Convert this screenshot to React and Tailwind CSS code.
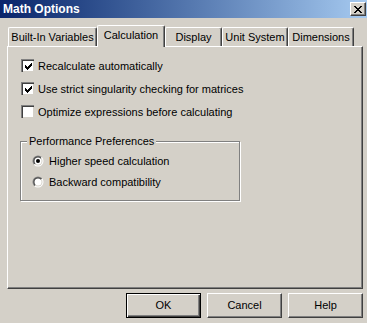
import React from "react";

const font = { fontFamily: '"Liberation Sans", Arial, sans-serif' };

function Check({ checked }) {
  return (
    <div className="w-[13px] h-[13px] bg-white border-t border-l border-[#808080] border-r-white border-b-white shadow-[inset_1px_1px_#404040,inset_-1px_-1px_#D4D0C8] flex items-center justify-center shrink-0">
      {checked && (
        <svg width="7" height="7" viewBox="0 0 7 7" shapeRendering="crispEdges">
          <path
            fill="#000"
            d="M6 0h1v3h-1zM5 1h1v3h-1zM4 2h1v3h-1zM3 3h1v3h-1zM2 4h1v3h-1zM1 3h1v3h-1zM0 2h1v3h-1z"
          />
        </svg>
      )}
    </div>
  );
}

function Radio({ checked }) {
  return (
    <svg width="12" height="12" viewBox="0 0 12 12" className="shrink-0">
      <defs>
        <linearGradient id="ro" x1="0" y1="0" x2="1" y2="1">
          <stop offset="0.5" stopColor="#808080" />
          <stop offset="0.5" stopColor="#ffffff" />
        </linearGradient>
        <linearGradient id="ri" x1="0" y1="0" x2="1" y2="1">
          <stop offset="0.5" stopColor="#404040" />
          <stop offset="0.5" stopColor="#D4D0C8" />
        </linearGradient>
      </defs>
      <circle cx="6" cy="6" r="5.5" fill="url(#ro)" />
      <circle cx="6" cy="6" r="4.5" fill="url(#ri)" />
      <circle cx="6" cy="6" r="3.5" fill="#fff" />
      {checked && <circle cx="6" cy="6" r="2" fill="#000" />}
    </svg>
  );
}

function Tab({ label, w, selected }) {
  if (selected) {
    return (
      <div
        className={`${w} h-[22px] mb-[-1px] relative z-10 bg-[#D4D0C8] border-l border-t border-white border-r border-r-[#404040] rounded-t-[2px] shadow-[inset_-1px_0_#808080] flex items-center justify-center pb-[3px] text-[11px] text-black`}
      >
        {label}
      </div>
    );
  }
  return (
    <div
      className={`${w} h-[19px] bg-[#D4D0C8] border-l border-t border-white border-r border-r-[#404040] rounded-t-[2px] shadow-[inset_-1px_0_#808080] flex items-center justify-center pt-[1px] text-[11px] text-black`}
    >
      {label}
    </div>
  );
}

function Btn({ label, def }) {
  return (
    <div
      className={`w-[75px] h-[25px] flex items-center justify-center text-[11px] text-black bg-[#D4D0C8] ${
        def
          ? "border border-black shadow-[inset_1px_1px_#fff,inset_-1px_-1px_#404040,inset_-2px_-2px_#808080]"
          : "border border-white border-r-[#404040] border-b-[#404040] shadow-[inset_-1px_-1px_#808080]"
      }`}
    >
      {label}
    </div>
  );
}

export default function App() {
  return (
    <div
      className="w-[367px] h-[323px] bg-[#D4D0C8] flex flex-col overflow-hidden select-none"
      style={font}
    >
      {/* Title bar */}
      <div className="h-[18px] bg-gradient-to-r from-[#0A246A] to-[#A6CAF0] flex items-center justify-between pl-[3px] pr-[1px]">
        <span className="text-white font-bold text-[12px] leading-none">Math Options</span>
        <div className="w-[16px] h-[14px] bg-[#D4D0C8] border border-white border-r-[#404040] border-b-[#404040] shadow-[inset_-1px_-1px_#808080] flex items-center justify-center">
          <svg width="8" height="7" viewBox="0 0 8 7" shapeRendering="crispEdges">
            <path
              fill="#000"
              d="M0 0h2v1h-2zM6 0h2v1h-2zM1 1h2v1h-2zM5 1h2v1h-2zM2 2h4v1h-4zM3 3h2v1h-2zM2 4h4v1h-4zM1 5h2v1h-2zM5 5h2v1h-2zM0 6h2v1h-2zM6 6h2v1h-2z"
            />
          </svg>
        </div>
      </div>

      {/* Tabs */}
      <div className="mt-[7px] flex items-end pl-[8px]">
        <Tab label="Built-In Variables" w="w-[89px]" />
        <Tab label="Calculation" w="w-[68px]" selected />
        <Tab label="Display" w="w-[57px]" />
        <Tab label="Unit System" w="w-[66px]" />
        <Tab label="Dimensions" w="w-[66px]" />
      </div>

      {/* Panel */}
      <div className="ml-[7px] w-[356px] h-[243px] border-l border-t border-white border-r border-b border-r-[#404040] border-b-[#404040] shadow-[inset_-1px_-1px_#808080] pl-[13px] pt-[12px] flex flex-col text-[11px] text-black">
        <div className="flex flex-col gap-[10px]">
          <div className="h-[13px] flex items-center gap-[4px]">
            <Check checked />
            <span className="pt-[2px]">Recalculate automatically</span>
          </div>
          <div className="h-[13px] flex items-center gap-[4px]">
            <Check checked />
            <span className="pt-[2px]">Use strict singularity checking for matrices</span>
          </div>
          <div className="h-[13px] flex items-center gap-[4px]">
            <Check />
            <span className="pt-[2px]">Optimize expressions before calculating</span>
          </div>
        </div>

        <fieldset className="ml-[-1px] mt-[17px] w-[220px] border border-[#808080] shadow-[1px_1px_#fff,inset_1px_1px_#fff] pl-[6px] pt-[7px] pb-[12px]">
          <legend className="px-[2px] bg-[#D4D0C8] leading-[13px] relative z-10">
            Performance Preferences
          </legend>
          <div className="ml-[5px] flex flex-col gap-[9px]">
            <div className="h-[12px] flex items-center gap-[5px]">
              <Radio checked />
              <span className="pt-[1px]">Higher speed calculation</span>
            </div>
            <div className="h-[12px] flex items-center gap-[5px]">
              <Radio />
              <span className="pt-[1px]">Backward compatibility</span>
            </div>
          </div>
        </fieldset>
      </div>

      {/* Buttons */}
      <div className="mt-[4px] flex justify-end gap-[6px] pr-[4px]">
        <Btn label="OK" def />
        <Btn label="Cancel" />
        <Btn label="Help" />
      </div>
    </div>
  );
}
